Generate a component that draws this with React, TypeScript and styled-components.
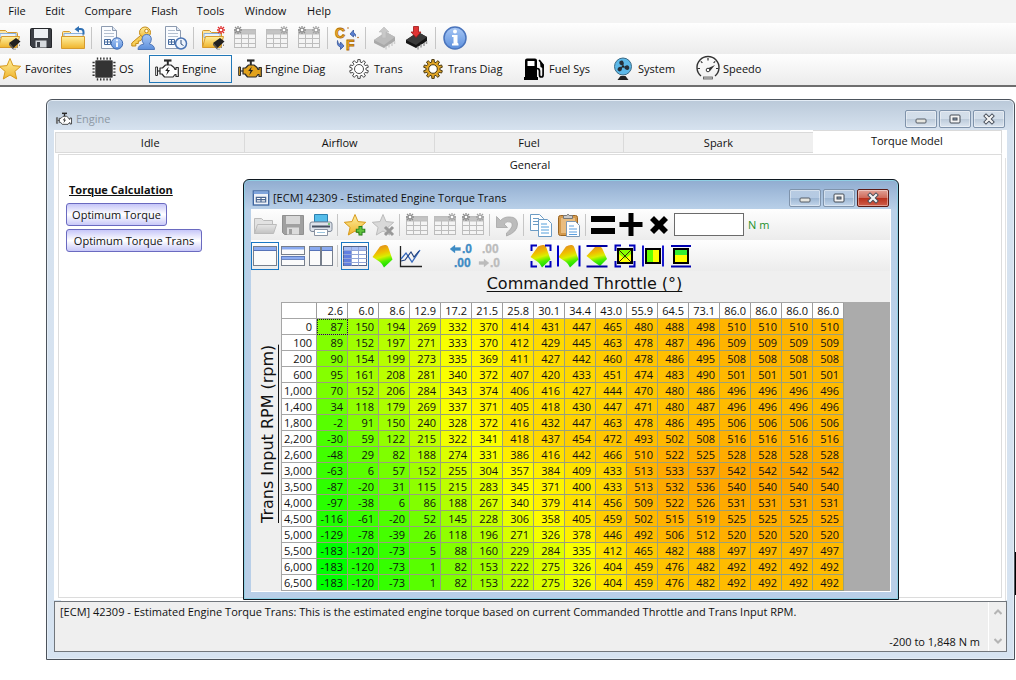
import React from 'react';
import styled, { createGlobalStyle, css } from 'styled-components';

const Global = createGlobalStyle`
  *, *::before, *::after { box-sizing: border-box; }
  body { margin: 0; background: #fff; color: #111; overflow-x: hidden; }
  body, button, input { font-family: 'Open Sans', 'Noto Sans', sans-serif; font-size: 11px; line-height: 16px; }
  button { margin: 0; padding: 0; border: 0; background: none; color: inherit; white-space: nowrap; }
  svg { display: block; flex: none; }
`;

/* ---------- data ---------- */

const throttle = ['2.6', '6.0', '8.6', '12.9', '17.2', '21.5', '25.8', '30.1', '34.4', '43.0', '55.9', '64.5', '73.1', '86.0', '86.0', '86.0', '86.0'];

const rows: [string, number[]][] = [
  ['0', [87, 150, 194, 269, 332, 370, 414, 431, 447, 465, 480, 488, 498, 510, 510, 510, 510]],
  ['100', [89, 152, 197, 271, 333, 370, 412, 429, 445, 463, 478, 487, 496, 509, 509, 509, 509]],
  ['200', [90, 154, 199, 273, 335, 369, 411, 427, 442, 460, 478, 486, 495, 508, 508, 508, 508]],
  ['600', [95, 161, 208, 281, 340, 372, 407, 420, 433, 451, 474, 483, 490, 501, 501, 501, 501]],
  ['1,000', [70, 152, 206, 284, 343, 374, 406, 416, 427, 444, 470, 480, 486, 496, 496, 496, 496]],
  ['1,400', [34, 118, 179, 269, 337, 371, 405, 418, 430, 447, 471, 480, 487, 496, 496, 496, 496]],
  ['1,800', [-2, 91, 150, 240, 328, 372, 416, 432, 447, 463, 478, 486, 495, 506, 506, 506, 506]],
  ['2,200', [-30, 59, 122, 215, 322, 341, 418, 437, 454, 472, 493, 502, 508, 516, 516, 516, 516]],
  ['2,600', [-48, 29, 82, 188, 274, 331, 386, 416, 442, 466, 510, 522, 525, 528, 528, 528, 528]],
  ['3,000', [-63, 6, 57, 152, 255, 304, 357, 384, 409, 433, 513, 533, 537, 542, 542, 542, 542]],
  ['3,500', [-87, -20, 31, 115, 215, 283, 345, 371, 400, 433, 513, 532, 536, 540, 540, 540, 540]],
  ['4,000', [-97, -38, 6, 86, 188, 267, 340, 379, 414, 456, 509, 522, 526, 531, 531, 531, 531]],
  ['4,500', [-116, -61, -20, 52, 145, 228, 306, 358, 405, 459, 502, 515, 519, 525, 525, 525, 525]],
  ['5,000', [-129, -78, -39, 26, 118, 196, 271, 326, 378, 446, 492, 506, 512, 520, 520, 520, 520]],
  ['5,500', [-183, -120, -73, 5, 88, 160, 229, 284, 335, 412, 465, 482, 488, 497, 497, 497, 497]],
  ['6,000', [-183, -120, -73, 1, 82, 153, 222, 275, 326, 404, 459, 476, 482, 492, 492, 492, 492]],
  ['6,500', [-183, -120, -73, 1, 82, 153, 222, 275, 326, 404, 459, 476, 482, 492, 492, 492, 492]],
];

const heat = (v: number) => {
  const mid = 350;
  if (v <= mid) return `rgb(${Math.round(((v + 183) / (mid + 183)) * 255)}, 255, 0)`;
  return `rgb(255, ${Math.round(255 - ((v - mid) / 192) * 90)}, 0)`;
};

/* ---------- icons ---------- */

const gearPath = (cx: number, cy: number, ro: number, ri: number, teeth: number) => {
  const pts: string[] = [];
  const step = (Math.PI * 2) / teeth;
  const at = (r: number, a: number) => `${(cx + r * Math.cos(a)).toFixed(2)} ${(cy + r * Math.sin(a)).toFixed(2)}`;
  for (let i = 0; i < teeth; i++) {
    const a = i * step - Math.PI / 2;
    pts.push(at(ri, a - step * 0.3), at(ro, a - step * 0.2), at(ro, a + step * 0.2), at(ri, a + step * 0.3));
  }
  return `M${pts.join('L')}Z`;
};

const STAR = 'M12 1.5l3 7.1 7.7.7-5.8 5.1 1.8 7.6-6.7-4-6.7 4 1.8-7.6L1.3 9.3l7.7-.7z';

const DefsSvg = styled.svg`position: absolute;`;
const Defs = () => (
  <DefsSvg width="0" height="0" aria-hidden="true">
    <defs>
      <linearGradient id="gold" x1="0" y1="0" x2="0" y2="1"><stop offset="0" stopColor="#fff0a0" /><stop offset="1" stopColor="#efb42c" /></linearGradient>
      <linearGradient id="blueg" x1="0" y1="0" x2="0" y2="1"><stop offset="0" stopColor="#a9c8f5" /><stop offset="1" stopColor="#5c8fdc" /></linearGradient>
      <linearGradient id="surf" x1="0.3" y1="0" x2="0.55" y2="1"><stop offset="0" stopColor="#e08a20" /><stop offset="0.35" stopColor="#f0c000" /><stop offset="0.55" stopColor="#d8f000" /><stop offset="0.75" stopColor="#50f000" /><stop offset="1" stopColor="#10d800" /></linearGradient>
      <linearGradient id="greyg" x1="0" y1="0" x2="0" y2="1"><stop offset="0" stopColor="#e6e6e6" /><stop offset="1" stopColor="#c2c2c2" /></linearGradient>
    </defs>
  </DefsSvg>
);

const Folder = () => (
  <g stroke="#d69a2d">
    <path d="M1.500 20.500V5.500q0-1 1-1h6l2 2h9q1 0 1 1v13z" fill="#fce6a4" />
    <path d="M3 7.500h16v4H3z" fill="#e9f2fb" stroke="#8ab0da" />
    <path d="M1.500 21.500l3-11h18l-3 11z" fill="url(#gold)" />
  </g>
);
const ChipSmall = () => (
  <g>
    <path d="M12 17l7-5 4.500 3.500-7 6.500z" fill="#222" />
    <path d="M12 17l4.500 5v2L12 19z" fill="#555" />
    <path d="M18 22.500v1.500M20.500 20.500v1.500M22.500 18.500v1.500" stroke="#888" />
  </g>
);
const Gridlines = () => (
  <g fill="none" stroke="#bdbdbd">
    <rect x="1.500" y="3.500" width="21" height="18" fill="#f4f4f4" />
    <path d="M1.500 4h21v4h-21z" fill="#c4c4c4" />
    <path d="M1.500 12.500h21M1.500 17.500h21M8.500 8v13.500M15.500 8v13.500" />
  </g>
);
const Burst = ({ x, y, c }: { x: number; y: number; c: string }) => (
  <g stroke={c} strokeWidth="1.300"><path d={`M${x - 4} ${y}h8M${x} ${y - 4}v8M${x - 3} ${y - 3}l6 6M${x + 3} ${y - 3}l-6 6`} /><circle cx={x} cy={y} r="1.300" fill="#fff" stroke="none" /></g>
);
const Sheet = () => (
  <g>
    <path d="M2.500 .5h11l4 4v18h-15z" fill="#fafcff" stroke="#8d9bb0" />
    <path d="M13.500 .5v4h4" fill="#dde6f2" stroke="#8d9bb0" />
    <path d="M5 4.500h7M5 7.500h10M5 10.500h10" stroke="#b4c0d0" />
    <path d="M5.500 13.500h6v5h-6zM5.500 16h6M8.500 13.500v5" fill="none" stroke="#456a9e" />
  </g>
);
const Engine = ({ fill }: { fill: string }) => (
  <g stroke="#2a2a2a" strokeWidth="1.200" strokeLinejoin="round">
    <path d="M9 3.500h7.500" strokeWidth="2.200" /><path d="M12.800 4v4" strokeWidth="2" />
    <path d="M5 11h2.500l3-3H16l3 2.500 1 2h1V10.500h2.300v9H21V17.500h-1l-2 2.500H9.500L7 17H5z" fill={fill} />
    <rect x=".7" y="10" width="1.800" height="8.500" fill={fill} strokeWidth="1" /><path d="M2.500 14H5" />
    <path d="M13.800 9.500l-3.600 4.500h2.300l-1.300 4.500 3.800-5.500h-2.300z" fill="#222" stroke="none" />
  </g>
);
const Surface = () => <path d="M1.500 13L9 2.500q3-2 6-1.500 2 .5 2.500 3l4 11.500-8.500 8q-2-4-4-5.500z" fill="url(#surf)" />;
const Clip = () => <path d="M2.500 7V1.500H8M16 1.500h5.500V7M21.500 17v5.500H16M8 22.500H2.500V17" fill="none" stroke="#00b" strokeWidth="2" />;
const WinFrame = () => <g><rect x=".5" y="2.500" width="23" height="19" fill="#fbfbfb" stroke="#777f8c" /><path d="M1 3h22v3H1z" fill="#8aaaf0" /><path d="M.5 6.500h23" stroke="#5673b8" /></g>;

const shapes: Record<string, React.ReactNode> = {
  openChip: <><Folder /><ChipSmall /></>,
  save: <><path d="M1.500 3.500q0-1 1-1h19q1 0 1 1v18h-19l-2-2z" fill="#3c3f45" stroke="#25272b" /><rect x="5" y="3" width="14" height="9" fill="#eceff2" /><rect x="6.500" y="14.500" width="11" height="7" fill="#d6dade" /><rect x="8" y="16" width="3" height="5" fill="#3c3f45" /></>,
  folderBack: (
    <>
      <g stroke="#d69a2d"><path d="M1.500 10.500v-4q0-1 1-1h6l2 2h11.500v3z" fill="#fce6a4" /><path d="M3 7.500h19v4H3z" fill="#e9f2fb" stroke="#8ab0da" /><path d="M.5 22.500v-12h23v12z" fill="url(#gold)" /></g>
      <path d="M22.500 8.500V6q0-3-3-3h-3" fill="none" stroke="#2f70b4" strokeWidth="2" /><path d="M18 0v6.500L13.500 3.200z" fill="#2f70b4" />
    </>
  ),
  sheetInfo: <><Sheet /><circle cx="18" cy="17.500" r="5.700" fill="url(#blueg)" stroke="#3b68b0" /><path d="M18 16.500v4.500M18 13.500v1.800" stroke="#fff" strokeWidth="1.800" /></>,
  keyUser: <><circle cx="14" cy="6.500" r="5.500" fill="url(#gold)" stroke="#c48a16" /><circle cx="15.500" cy="5" r="1.800" fill="#fff" stroke="#c48a16" /><path d="M9.500 9.500L.8 17v3h4v-2.500h2.500V15H9l4-3.500z" fill="#f7cf58" stroke="#c48a16" /><path d="M7 23.500q0-4.500 6-5.500-2-2-2-5 .5-4.500 4.700-4.500 4.300 0 4.600 4.500 0 3-2 5 5.200 1 5.200 5.500z" fill="url(#blueg)" stroke="#5077b8" /></>,
  sheetClock: <><Sheet /><circle cx="18" cy="17.500" r="5.500" fill="#eef4fc" stroke="#4a74b4" strokeWidth="1.500" /><path d="M18 14v4l2.500 1.500" fill="none" stroke="#35537f" /></>,
  openNew: <><Folder /><ChipSmall /><Burst x={20} y={4} c="#e02c2c" /></>,
  tableL: <><Gridlines /><Burst x={5} y={4} c="#8d8d8d" /></>,
  tableR: <><Gridlines /><Burst x={19} y={4} c="#a2a2a2" /></>,
  tableB: <><Gridlines /><Burst x={5} y={4} c="#8d8d8d" /><Burst x={19} y={4} c="#a2a2a2" /></>,
  units: (
    <g fontFamily="Liberation Sans, sans-serif" fontWeight="700" fontSize="14" fill="#f9b82c" stroke="#ad6b08" strokeWidth=".8">
      <text x="0" y="12">C</text><text x="11" y="24">F</text>
      <circle cx="13" cy="2" r=".8" fill="#b4671c" stroke="none" /><circle cx="23" cy="11.500" r=".8" fill="#b4671c" stroke="none" />
      <path d="M20.500 10.500q.5-3-2-4v-2.500l-3.500 4 3.500 3V9" fill="#5a7fd0" stroke="#39589c" /><path d="M2.500 14.500q0 3.500 3 4V16l3.500 4-3.500 3.500V21q-4-1-3-6.500" fill="#5a7fd0" stroke="#39589c" />
    </g>
  ),
  chipGrey: <><path d="M1 14L13 6l9 5v4L11 22 1 17z" fill="#a9a9a9" /><path d="M1 14L13 6l9 5-11 8z" fill="#bcbcbc" /><path d="M13 20.500v3M16 18.500v3M19 17v3M21.500 15v3" stroke="#cfcfcf" strokeWidth="1.500" /><path d="M9 12V6H6l5-5 5 5h-3v6z" fill="#c9c9c9" stroke="#bbb" strokeWidth=".6" /></>,
  chipRed: <><path d="M1 14L13 6l9 5v4L11 22 1 17z" fill="#151515" /><path d="M1 14L13 6l9 5-11 8z" fill="#3a3a3a" /><path d="M13 20.500v3M16 18.500v3M19 17v3M21.500 15v3" stroke="#999" strokeWidth="1.500" /><path d="M8.500 .5h5v5.500H16l-5 5.500L6 6h2.500z" fill="#e03434" stroke="#9c1414" strokeWidth=".8" /></>,
  info: <><circle cx="12" cy="12" r="11" fill="url(#blueg)" stroke="#4a74bc" strokeWidth="1.500" /><circle cx="12" cy="5.500" r="2" fill="#fff" /><path d="M9 10h4.500v8H15M9 18.500h6.500" stroke="#fff" strokeWidth="2" fill="none" /><path d="M12 10v8" stroke="#fff" strokeWidth="3" /></>,

  star: <path d={STAR} fill="url(#gold)" stroke="#d79a1c" />,
  chip: <><path d="M5.500 .5v23M8.700 .5v23M11.900 .5v23M15.100 .5v23M18.300 .5v23M.5 5.500h23M.5 8.700h23M.5 11.900h23M.5 15.100h23M.5 18.300h23" stroke="#333" strokeWidth="1.400" /><rect x="3" y="3" width="18" height="18" rx="1" fill="#333" stroke="#fff" strokeWidth=".6" /></>,
  engine: <Engine fill="#fff" />,
  engineDiag: <Engine fill="#e2a21c" />,
  gear: <><path d={gearPath(12, 12, 9.5, 7, 10)} fill="#fff" stroke="#4a4a4a" /><circle cx="12" cy="12" r="4.500" fill="none" stroke="#4a4a4a" /></>,
  gearGold: <><path d={gearPath(12, 12, 9.5, 7, 10)} fill="#e0a526" stroke="#4b3a12" /><circle cx="12" cy="12" r="4.300" fill="#fff" stroke="#4b3a12" /></>,
  fuel: <><path d="M3 3.500q0-2 2-2h8q2 0 2 2V20h1v3H2v-3h1z" fill="#000" /><rect x="5.500" y="4" width="7" height="5" fill="#fff" /><path d="M15 11.500q2.500 0 2.500 2.500v4q0 2 1.800 2t1.800-2V8l-4-5" fill="none" stroke="#000" strokeWidth="1.700" /><path d="M18 5l3.500 2.500v4l-3-1.500z" fill="#000" /></>,
  fan: <><circle cx="12" cy="9.500" r="8.500" fill="#5cb8e8" stroke="#3a6a86" /><circle cx="12" cy="9.500" r="1.300" fill="#222" /><path d="M11.500 8.500q-4-.5-3-4 3-2 4 .5T11.500 8.500zM13 10q3-3 5-.5 1 3-1.500 3.500T13 10zM11 10q.5 4-2.500 4.500-3-1.500-1.500-3.500T11 10z" fill="#27303a" /><path d="M9.500 19h5l3 4h-11z" fill="#222" /></>,
  speedo: <><path d="M5 19A11 11 0 1 1 19 19" fill="none" stroke="#333" strokeWidth="1.400" /><path d="M1.500 11.500h2.500M20 11.500h2.500M12 1v2.500M4.800 4.300l1.600 1.600M19.200 4.300l-1.600 1.600" stroke="#333" strokeWidth="1.200" /><path d="M11.500 11.500L19 8l-5 6z" fill="#333" /><circle cx="12" cy="13" r="1.800" fill="#fff" stroke="#333" /><rect x="7.500" y="20" width="9" height="2" fill="#ccc" stroke="#555" strokeWidth=".8" /></>,

  openGrey: <g stroke="#bbb"><path d="M1.500 20.500v-15h7l2 2h9v13z" fill="#e2e2e2" /><path d="M1.500 20.500l3-9h19l-3 9z" fill="url(#greyg)" /></g>,
  saveGrey: <><path d="M1.500 2.500h21v19h-19l-2-2z" fill="#a0a0a0" stroke="#909090" /><rect x="5" y="3" width="14" height="8" fill="#d8d8d8" /><rect x="6" y="14.500" width="12" height="7" fill="#dcdcdc" /><rect x="8" y="16" width="3" height="5" fill="#a0a0a0" /></>,
  print: <><path d="M5.500 9V1.500h13V9z" fill="#55bdea" stroke="#2c7fae" /><rect x="1" y="9" width="22" height="9.500" rx="2" fill="#dde2ea" stroke="#7c8798" /><path d="M3 13.500h18" stroke="#454f60" strokeWidth="2" /><path d="M5.500 16.500h13v6h-13z" fill="#fff" stroke="#8a93a2" /><path d="M8 19.500h8" stroke="#9cc4de" /><circle cx="20" cy="11" r="1" fill="#58c058" /></>,
  starAdd: <><path d={STAR} fill="url(#gold)" stroke="#d79a1c" /><path d="M17.500 13v9.500M12.800 17.700h9.500" stroke="#257c1c" strokeWidth="4" /><path d="M17.500 14v7.500M13.800 17.700h7.500" stroke="#62c43c" strokeWidth="2.200" /></>,
  starDel: <><path d={STAR} fill="#d9d9d9" stroke="#bcbcbc" /><path d="M14 14l8 8M22 14l-8 8" stroke="#999" strokeWidth="3" /></>,
  undo: <path d="M1.500 3.500v11h11L9 11q3-3.500 6.500-2 3.500 2.500 0 7-1.500 2-4 4v3q11-4 11-12Q22 4 15 4 9 3.500 5.500 7.500z" fill="#bcbcbc" stroke="#a6a6a6" strokeWidth=".8" />,
  copy: <g stroke="#6b9bc4" fill="#fff"><path d="M1.500 1.500h9l4 4v12h-13z" /><path d="M4 5.500h6M4 8.500h6M4 11.500h5" /><path d="M9.500 6.500h9l4 4v13h-13z" /><path d="M12 11h6M12 14h8M12 17h8M12 20h8" stroke="#55a0dc" /></g>,
  paste: <><rect x="1.500" y="2.500" width="19" height="20" rx="2" fill="#d39a4e" stroke="#9b6420" /><rect x="4" y="5" width="14" height="15" fill="#e9bd80" /><path d="M6.500 5.500v-3h3q1.500-2.500 3 0h3v3z" fill="#c9c9c9" stroke="#777" /><path d="M9.500 8.500h9l4 4v11h-13z" fill="#fff" stroke="#7c98b4" /><path d="M12 13h5M12 16h8M12 19h8M12 21.500h8" stroke="#5a9fe0" /></>,
  equals: <path d="M0 3h24v6H0zM0 15h24v6H0z" fill="#000" />,
  plus: <path d="M9.500 0h5v9h9v5h-9v9h-5v-9h-9V9h9z" fill="#000" />,
  times: <path d="M3 7l4-4 5 5 5-5 4 4-5 5 5 5-4 4-5-5-5 5-4-4 5-5z" fill="#000" />,

  win: <WinFrame />,
  winH: <g><rect x=".5" y="2.500" width="23" height="8" fill="#fbfbfb" stroke="#777f8c" /><path d="M1 3h22v2.500H1z" fill="#8aaaf0" /><rect x=".5" y="12.500" width="23" height="9" fill="#fbfbfb" stroke="#777f8c" /><path d="M.5 12.500h23v3H.5z" fill="#8aaaf0" stroke="#5673b8" strokeWidth=".8" /></g>,
  winV: <g><WinFrame /><path d="M12 2v20" stroke="#777f8c" strokeWidth="2" /></g>,
  tableBlue: <g><rect x=".5" y="2.500" width="23" height="19" fill="#fff" stroke="#55658a" /><path d="M1 3h22v3H1z" fill="#a8bef5" /><path d="M1 6h7v15.500H1z" fill="#6280e0" /><path d="M.5 6.500h23M.5 10.500h23M.5 14.500h23M.5 18.500h23M8.500 3v18.500M15.500 3v18.500" stroke="#93a6d8" /></g>,
  surface: <Surface />,
  chart: <><path d="M1.500 2v20.500H23" fill="none" stroke="#222" strokeWidth="1.300" /><path d="M2 15l5-6 6 9 8-12" fill="none" stroke="#3568bd" strokeWidth="1.300" /><path d="M2 17l4-1 6-8 3 5 5-6" fill="none" stroke="#20407c" strokeWidth="1.100" /></>,
  decLess: <g fontFamily="Liberation Sans, sans-serif" fontWeight="700" fontSize="12" fill="#3d8bc4" stroke="#3d8bc4" strokeWidth=".3"><text x="12" y="9">.0</text><text x="4" y="23">.00</text><path d="M0 5l5-4v2.500h5.500v3H5V9z" /></g>,
  decMore: <g fontFamily="Liberation Sans, sans-serif" fontWeight="700" fontSize="12" fill="#bcbcbc" stroke="#bcbcbc" strokeWidth=".3"><text x="4" y="9">.00</text><text x="12" y="23">.0</text><path d="M11 19l-5-4v2.500H1v3h5V23z" /></g>,
  surfClip: <><Surface /><Clip /></>,
  surfV: <><Surface /><path d="M1 1.500v21M22.500 1.500v21" stroke="#0000c8" strokeWidth="2" /></>,
  surfH: <><path d="M1.500 12L10 3q4-2.500 7 1l5 11-7 7-6-4z" fill="url(#surf)" /><path d="M1.500 2h21M1.500 22.500h21" stroke="#0000a0" strokeWidth="1.800" /></>,
  boxClip: <><rect x="5" y="5" width="14" height="14" fill="#ff0" stroke="#000" strokeWidth="2" /><path d="M6 6h12v4l-6 5-6-5z" fill="#8f0" /><path d="M6 6l12 12M18 6l-12 12" stroke="#3a2a00" /><Clip /></>,
  boxV: <><rect x="5" y="5" width="14" height="14" fill="#ff0" /><rect x="5" y="5" width="7" height="14" fill="#6f0" /><rect x="5" y="5" width="14" height="14" fill="none" stroke="#000" strokeWidth="2" /><path d="M2 1.500v21M22 1.500v21" stroke="#0000c8" strokeWidth="1.800" /></>,
  boxH: <><rect x="5" y="5" width="14" height="14" fill="#ff0" /><rect x="5" y="5" width="14" height="6" fill="#3e3" /><rect x="5" y="5" width="14" height="14" fill="none" stroke="#000" strokeWidth="2" /><path d="M2 2h20M2 22.500h20" stroke="#0000b0" strokeWidth="2" /></>,
  appTable: <><rect x=".5" y="1.500" width="23" height="21" fill="#eef2f8" stroke="#3f66a0" strokeWidth="2" /><path d="M1 2h22v4H1z" fill="#7fa4dc" /><path d="M5 11h14v7H5zM5 14.500h14M12 11v7" fill="#fff" stroke="#4a6690" strokeWidth="1.800" /></>,
};

const Icon = ({ name, size = 24 }: { name: string; size?: number }) => (
  <svg width={size} height={size} viewBox="0 0 24 24" aria-hidden="true" overflow="visible">{shapes[name]}</svg>
);

/* ---------- top bars ---------- */

const MenuBar = styled.nav`
  display: flex; align-items: center; gap: 18px; height: 23px; padding: 0 7px 1px; background: #f3f3f3;
`;
const MenuItem = styled.button<{ $w: number }>`width: ${p => p.$w}px; height: 20px; text-align: center;`;

const bar = css`background: linear-gradient(#fefefe, #ececec);`;
const Toolbar = styled.div`${bar} display: flex; align-items: center; height: 31px; overflow: hidden;`;
const MainTools = styled.div`display: flex; align-items: center; margin-left: -7px; padding-bottom: 1px;`;
const ToolButton = styled.button<{ $w: number; $on?: boolean }>`
  display: flex; align-items: center; justify-content: center; flex: none;
  width: ${p => p.$w}px; height: 28px; border: 1px solid ${p => (p.$on ? '#1977c4' : 'transparent')};
`;
const Divider = styled.span`flex: none; width: 6px; height: 22px; border-left: 1px solid #c6c6c6; margin-left: 2px; margin-right: -2px;`;
const Gap = styled.span`flex: none; width: 23px;`;

const NavBar = styled.nav`${bar} height: 33px; border-bottom: 2px solid #6e6e6e; overflow: hidden; padding-top: 1px;`;
const NavItems = styled.div`display: flex; margin-left: -8px;`;
const NavButton = styled.button<{ $w: number; $on?: boolean }>`
  display: flex; align-items: center; flex: none; width: ${p => p.$w}px; height: 28px; padding-left: 2px;
  border: 1px solid ${p => (p.$on ? '#2178b8' : 'transparent')};
`;
const NavIcon = styled.span`display: flex; justify-content: center; flex: none; width: 30px;`;

/* ---------- windows ---------- */

const Desktop = styled.main`position: relative; padding: 12px 1px 20px 46px;`;
const Frame = styled.section<{ $active?: boolean }>`
  display: flex; flex-direction: column; border: 1px solid ${p => (p.$active ? '#101820' : '#4c535c')}; border-radius: 6px 6px 0 0;
  padding: 0 7px 7px;
  background: ${p => (p.$active
    ? 'linear-gradient(#90acd0, #bad1e9 30px, #b9cfe8)'
    : 'linear-gradient(#bac9d9, #d6e2ef 30px, #d6e3f1)')};
  box-shadow: inset 0 0 0 1px ${p => (p.$active ? '#8fd0e4' : '#e4edf6')};
`;
const OuterFrame = styled(Frame)`position: relative;`;
const InnerFrame = styled(Frame)`position: absolute; left: 196px; top: 79px; width: 656px;`;

const TitleBar = styled.header<{ $active?: boolean }>`
  display: flex; align-items: center; gap: 4px; height: ${p => (p.$active ? 29 : 30)}px; padding: 7px 2px 0;
  color: ${p => (p.$active ? '#111' : '#8d98a4')};
`;
const TitleText = styled.h1`flex: 1; margin: 0; font-size: 11px; font-weight: 400; line-height: 16px;`;
const WinButtons = styled.div`display: flex; gap: 2px;`;
const WinButton = styled.button<{ $close?: boolean }>`
  display: flex; align-items: center; justify-content: center; width: 32px; height: 18px;
  border: 1px solid ${p => (p.$close ? '#5c1b14' : '#7f93ab')}; border-radius: 2px;
  background: ${p => (p.$close ? 'linear-gradient(#e2a297, #cf6a5a 48%, #b9311d 52%, #cf5f4b)' : 'linear-gradient(#ffffff44, #ffffff22 48%, #00204014 52%, #ffffff33)')};
  box-shadow: inset 0 0 0 1px #ffffff66;
`;

const MinIcon = () => <svg width="12" height="12" viewBox="0 0 12 12"><rect x="1" y="6" width="10" height="4" rx="1" fill="#e6e6e0" stroke="#555c66" /></svg>;
const MaxIcon = () => <svg width="12" height="12" viewBox="0 0 12 12"><rect x="1" y="2" width="10" height="8" rx="1" fill="#f4f4f4" stroke="#434a55" /><rect x="4" y="5" width="4" height="2" fill="#8da2ba" stroke="#434a55" /></svg>;
const CloseIcon = () => <svg width="12" height="12" viewBox="0 0 12 12"><path d="M3 3l6 6M9 3L3 9" stroke="#454c58" strokeWidth="4" strokeLinecap="square" /><path d="M3 3l6 6M9 3L3 9" stroke="#f4f4f4" strokeWidth="2.200" strokeLinecap="square" /></svg>;

const WindowControls = ({ active }: { active?: boolean }) => (
  <WinButtons>
    <WinButton aria-label="Minimize"><MinIcon /></WinButton>
    <WinButton aria-label="Maximize"><MaxIcon /></WinButton>
    <WinButton aria-label="Close" $close={active}><CloseIcon /></WinButton>
  </WinButtons>
);

const TabPane = styled.div`background: #fff; padding: 0 3px 2px 4px;`;
const Tabs = styled.div`display: flex; align-items: flex-end; height: 24px; margin: 0 2px 0 -3px;`;
const Tab = styled.button<{ $on?: boolean }>`
  flex: 1 1 0; height: ${p => (p.$on ? 24 : 21)}px; margin-bottom: ${p => (p.$on ? 0 : 1)}px; padding-bottom: ${p => (p.$on ? 2 : 0)}px;
  border: 1px solid #dadada; border-left-width: ${p => (p.$on ? 0 : 1)}px; border-right-width: ${p => (p.$on ? 1 : 0)}px;
  border-bottom-color: ${p => (p.$on ? '#fff' : '#dadada')};
  background: ${p => (p.$on ? '#fff' : '#efefef')};
`;
const Page = styled.div`
  min-height: 444px; border: 1px solid #dcdcdc; margin-right: 2px; padding: 1px 8px; box-shadow: 3px 3px 0 #fff, 4px 4px 0 #e2e2e2;
`;
const SubTab = styled.button`display: block; width: 100%; height: 18px; text-align: center;`;
const SideList = styled.div`display: flex; flex-direction: column; align-items: flex-start; gap: 3px; padding-top: 8px;`;
const SideTitle = styled.h2`margin: 0 0 2px 2px; font-size: 11px; line-height: 16px; font-weight: 700; text-decoration: underline;`;
const SideButton = styled.button<{ $w: number }>`
  width: ${p => p.$w}px; height: 23px; border: 1px solid #6a6ac0; border-radius: 3px; margin-left: -1px;
  background: linear-gradient(#c6c6f8, #fff 50%, #c8c8f8);
`;

const Status = styled.footer`
  display: flex; height: 51px; margin-top: 1px; border: 1px solid #71767c; background: #efefef;
`;
const StatusText = styled.div`flex: 1; display: flex; flex-direction: column; justify-content: space-between; padding: 2px 8px 1px 5px; border-right: 1px solid #fff;`;
const Range = styled.span`align-self: flex-end;`;
const Scroller = styled.div`display: flex; flex-direction: column; justify-content: space-between; align-items: center; width: 17px; padding: 7px 0;`;
const Arrow = ({ down }: { down?: boolean }) => (
  <svg width="8" height="6" viewBox="0 0 8 6"><path d={down ? 'M.5 1L4 4.500 7.500 1' : 'M.5 5L4 1.500 7.500 5'} fill="none" stroke="#b4b4b4" strokeWidth="2" /></svg>
);
const Sliver = styled.div`position: absolute; right: 0; top: 465px; width: 1px; height: 43px; background: #000;`;

/* ---------- table window ---------- */

const Client = styled.div`background: #efefef; border-bottom: 1px solid #fff; border-right: 1px solid #fff;`;
const ValueInput = styled.input`width: 70px; height: 23px; margin-left: 1px; padding: 2px 4px; border: 1px solid #6b6b6b; background: #fff;`;
const UnitLabel = styled.label`margin-left: 4px; color: #23902a;`;
const Plot = styled.div`
  display: grid; grid-template-columns: 30px 1fr; grid-template-rows: 31px auto; height: 320px;
`;
const axis = css`font-family: 'DejaVu Sans', Verdana, sans-serif; font-size: 16px; line-height: 20px; text-decoration: underline; text-underline-offset: 2px;`;
const XLabel = styled.div`${axis} grid-column: 2; text-align: center; padding: 3px 2px 0 0;`;
const YLabel = styled.div`${axis} grid-column: 1; grid-row: 1 / 3; justify-self: end; writing-mode: vertical-rl; transform: rotate(180deg); text-align: center; padding-bottom: 6px; margin-right: 3px;`;
const GridArea = styled.div`grid-column: 2; background: #ababab;`;
const Data = styled.table`
  table-layout: fixed; width: 563px; border-collapse: separate; border-spacing: 0; border-left: 1px solid #a6a6a6;
  border-top: 1px solid #a6a6a6; font-size: 11px; line-height: 15px; text-align: right;
  th, td { height: 16px; padding: 0 4px 0 0; font-weight: 400; border-right: 1px solid #9d9d9d; border-bottom: 1px solid #a6a6a6; }
  th { background: #fff; }
  td { border-color: #9aa07c; }
  th:first-child { width: 35px; }
`;
const Cell = styled.td<{ $focus?: boolean }>`${p => p.$focus && css`outline: 1px dotted #222; outline-offset: -1px;`}`;

/* ---------- composition ---------- */

const Tools = ({ items, w, on = [], size }: { items: [string, string][]; w: number; on?: string[]; size?: number }) => (
  <>
    {items.map(([icon, label], i) =>
      icon === '|' ? <Divider key={i} /> : icon === ' ' ? <Gap key={i} /> : (
        <ToolButton key={i} $w={w} $on={on.includes(icon)} aria-label={label}><Icon name={icon} size={size} /></ToolButton>
      ))}
  </>
);

const mainTools: [string, string][] = [
  ['openChip', 'Open'], ['save', 'Save'], ['folderBack', 'Close file'], ['|', ''], ['sheetInfo', 'File info'], ['keyUser', 'Credits'],
  ['sheetClock', 'History'], ['|', ''], ['openNew', 'Open compare'], ['tableL', 'Copy left'], ['tableR', 'Copy right'], ['tableB', 'Copy both'],
  ['|', ''], ['units', 'Units'], ['|', ''], ['chipGrey', 'Read'], ['chipRed', 'Write'], ['|', ''], ['info', 'About'],
];
const editTools: [string, string][] = [
  ['openGrey', 'Open'], ['saveGrey', 'Save'], ['print', 'Print'], ['|', ''], ['starAdd', 'Add favorite'], ['starDel', 'Remove favorite'], ['|', ''],
  ['tableL', 'Compare left'], ['tableR', 'Compare right'], ['tableB', 'Compare both'], ['|', ''], ['undo', 'Undo'], ['|', ''], ['copy', 'Copy'],
  ['paste', 'Paste'], ['|', ''], ['equals', 'Set'], ['plus', 'Add'], ['times', 'Multiply'],
];
const viewTools: [string, string][] = [
  ['win', 'Single view'], ['winH', 'Split rows'], ['winV', 'Split columns'], ['|', ''], ['tableBlue', 'Table'], ['surface', 'Surface'], ['chart', 'Chart'],
  [' ', ''], ['decLess', 'Fewer decimals'], ['decMore', 'More decimals'], [' ', ''], ['surfClip', 'Interpolate'], ['surfV', 'Interpolate columns'],
  ['surfH', 'Interpolate rows'], ['boxClip', 'Fill'], ['boxV', 'Fill columns'], ['boxH', 'Fill rows'],
];
const menus: [string, number][] = [['File', 20], ['Edit', 20], ['Compare', 50], ['Flash', 27], ['Tools', 29], ['Window', 45], ['Help', 26]];
const navs: [string, string, number][] = [
  ['star', 'Favorites', 94], ['chip', 'OS', 63], ['engine', 'Engine', 83], ['engineDiag', 'Engine Diag', 109], ['gear', 'Trans', 74],
  ['gearGold', 'Trans Diag', 101], ['fuel', 'Fuel Sys', 89], ['fan', 'System', 85], ['speedo', 'Speedo', 90],
];

export default function App() {
  return (
    <>
      <Global />
      <Defs />
      <MenuBar>{menus.map(([m, w]) => <MenuItem key={m} $w={w}>{m}</MenuItem>)}</MenuBar>
      <Toolbar><MainTools><Tools items={mainTools} w={32} /></MainTools></Toolbar>
      <NavBar>
        <NavItems>
          {navs.map(([icon, label, w]) => (
            <NavButton key={label} $w={w} $on={label === 'Engine'}><NavIcon><Icon name={icon} /></NavIcon>{label}</NavButton>
          ))}
        </NavItems>
      </NavBar>
      <Desktop>
        <OuterFrame>
          <TitleBar><Icon name="engine" size={16} /><TitleText>Engine</TitleText><WindowControls /></TitleBar>
          <TabPane>
            <Tabs role="tablist">
              {['Idle', 'Airflow', 'Fuel', 'Spark', 'Torque Model'].map(t => (
                <Tab key={t} role="tab" $on={t === 'Torque Model'} aria-selected={t === 'Torque Model'}>{t}</Tab>
              ))}
            </Tabs>
            <Page>
              <SubTab>General</SubTab>
              <SideList>
                <SideTitle>Torque Calculation</SideTitle>
                <SideButton $w={101}>Optimum Torque</SideButton>
                <SideButton $w={136}>Optimum Torque Trans</SideButton>
              </SideList>
            </Page>
          </TabPane>
          <Status>
            <StatusText>
              <span>[ECM] 42309 - Estimated Engine Torque Trans: This is the estimated engine torque based on current Commanded Throttle and Trans Input RPM.</span>
              <Range>-200 to 1,848 N m</Range>
            </StatusText>
            <Scroller><Arrow /><Arrow down /></Scroller>
          </Status>

          <InnerFrame $active>
            <TitleBar $active><Icon name="appTable" size={16} /><TitleText>[ECM] 42309 - Estimated Engine Torque Trans</TitleText><WindowControls active /></TitleBar>
            <Client>
              <Toolbar>
                <Tools items={editTools} w={28} />
                <ValueInput id="value" aria-label="Value" />
                <UnitLabel htmlFor="value">N m</UnitLabel>
              </Toolbar>
              <Toolbar><Tools items={viewTools} w={28} on={['win', 'tableBlue']} /></Toolbar>
              <Plot>
                <XLabel>Commanded Throttle (°)</XLabel>
                <YLabel>Trans Input RPM (rpm)</YLabel>
                <GridArea>
                  <Data>
                    <thead><tr><th />{throttle.map((t, i) => <th key={i} scope="col">{t}</th>)}</tr></thead>
                    <tbody>
                      {rows.map(([rpm, vals], r) => (
                        <tr key={rpm}>
                          <th scope="row">{rpm}</th>
                          {vals.map((v, c) => <Cell key={c} $focus={r === 0 && c === 0} style={{ background: heat(v) }}>{v}</Cell>)}
                        </tr>
                      ))}
                    </tbody>
                  </Data>
                </GridArea>
              </Plot>
            </Client>
          </InnerFrame>
        </OuterFrame>
        <Sliver />
      </Desktop>
    </>
  );
}
